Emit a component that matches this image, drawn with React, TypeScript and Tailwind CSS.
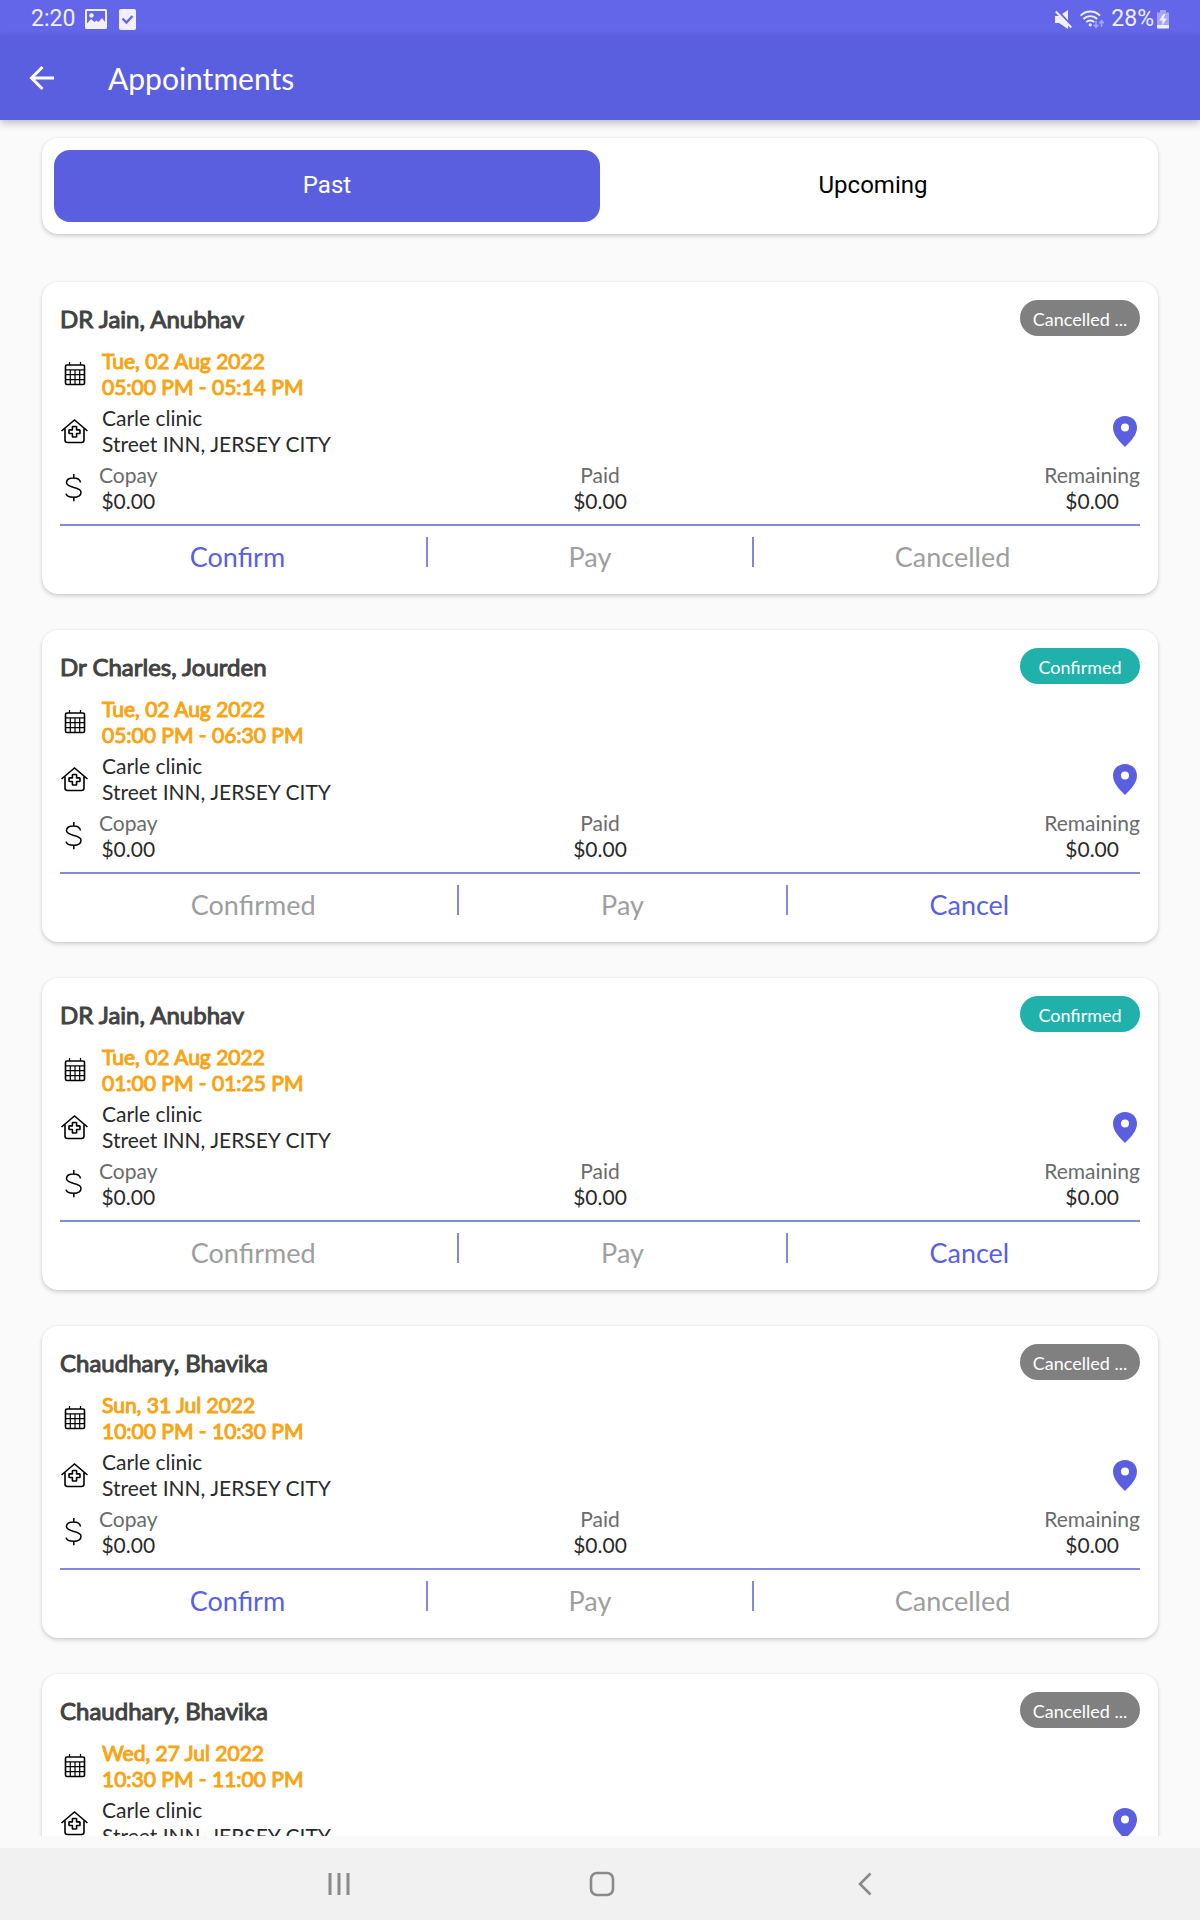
import clsx from "clsx";
import React from "react";

type Appointment = {
   doctor: string;
   date: string;
   time: string;
   confirmed: boolean;
};

const appointments: Appointment[] = [
   { doctor: "DR Jain, Anubhav", date: "Tue, 02 Aug 2022", time: "05:00 PM - 05:14 PM", confirmed: false },
   { doctor: "Dr Charles, Jourden", date: "Tue, 02 Aug 2022", time: "05:00 PM - 06:30 PM", confirmed: true },
   { doctor: "DR Jain, Anubhav", date: "Tue, 02 Aug 2022", time: "01:00 PM - 01:25 PM", confirmed: true },
   { doctor: "Chaudhary, Bhavika", date: "Sun, 31 Jul 2022", time: "10:00 PM - 10:30 PM", confirmed: false },
   { doctor: "Chaudhary, Bhavika", date: "Wed, 27 Jul 2022", time: "10:30 PM - 11:00 PM", confirmed: false },
];

const cardStyle =
   "rounded-2xl bg-white shadow-[0_2px_4px_rgba(0,0,0,0.18),0_0_2px_rgba(0,0,0,0.06)]";

function StatusBar() {
   return (
      <div className="flex h-9 shrink-0 items-center justify-between bg-[#6366e8] pt-0.5 pr-[31px] pl-[31px] text-[#f0f0ff]">
         <div className="flex items-center">
            <span className="font-[Roboto,sans-serif] text-[23px] leading-8">2:20</span>
            <svg className="ml-[10px] h-5 w-[22px]" viewBox="0 0 22 20">
               <path
                  fill="currentColor"
                  fillRule="evenodd"
                  d="M1.5 0h19A1.5 1.5 0 0 1 22 1.500v17a1.500 1.500 0 0 1-1.500 1.500h-19A1.500 1.500 0 0 1 0 18.500v-17A1.500 1.500 0 0 1 1.500 0zM2 2v12.500l4-4.500 3.500 3 2-1.500 2 1.500L17 9l3 4V2z"
               />
               <circle cx="6.500" cy="6.500" r="2.200" fill="currentColor" />
            </svg>
            <svg className="ml-3 h-[21px] w-[17px]" viewBox="0 0 17 21">
               <rect width="17" height="21" rx="2" fill="currentColor" />
               <path d="M3.500 9.500l4 4 6-6.500" fill="none" stroke="#6366e8" strokeWidth="2.400" />
            </svg>
         </div>
         <div className="flex items-center">
            <svg className="h-[19px] w-[17px]" viewBox="0 0 17 19">
               <path d="M0 6h4l9-6v19l-9-6H0z" fill="currentColor" />
               <path d="M2 .5l15 16.500" stroke="#6366e8" strokeWidth="3" />
               <path d="M.8 1.500l15.500 16" stroke="currentColor" strokeWidth="2" />
            </svg>
            <svg className="ml-2 h-[19px] w-6" viewBox="0 0 24 19">
               <g fill="none" stroke="currentColor" strokeWidth="1.800">
                  <path d="M.6 5.600a13.500 13.500 0 0 1 19.400 0" />
                  <path d="M3.500 9a9.500 9.500 0 0 1 13.600 0" />
                  <path d="M6.300 12.200a5.600 5.600 0 0 1 8 0" />
               </g>
               <circle cx="10.300" cy="14.800" r="1.600" fill="currentColor" />
               <g fill="none" stroke="#a5a6f6" strokeWidth="1.600">
                  <path d="M16 11v6M13.800 14.800L16 17.200l2.200-2.400" />
                  <path d="M21.500 17v-6M19.300 13.200l2.200-2.400 2.200 2.400" />
               </g>
            </svg>
            <span className="ml-[7px] font-[Roboto,sans-serif] text-[23px] leading-8">28%</span>
            <svg className="ml-[3px] h-[19px] w-3" viewBox="0 0 12 19">
               <path d="M3 0h6v2.500h3V15H0V2.500h3z" fill="#a5a6f6" />
               <path d="M0 15h12v3.500H0zM6.500 4L2 10.500h3.500L5 15.500l5-7H6.500L8.500 4z" fill="currentColor" />
            </svg>
         </div>
      </div>
   );
}

function CalendarIcon() {
   return (
      <svg className="h-7 w-7" viewBox="0 0 28 28" fill="none" stroke="#000">
         <rect x="5.500" y="5" width="19" height="19.500" rx="1.500" strokeWidth="1.600" />
         <path
            d="M5 9.800h20M5 14.700h20M5 19.600h20M10.300 10v14M15 10v14M19.700 10v14M9.500 2v3M20.500 2v3"
            strokeWidth="1.200"
         />
      </svg>
   );
}

function ClinicIcon() {
   return (
      <svg className="h-7 w-7" viewBox="0 0 28 28" fill="none" stroke="#000" strokeWidth="1.600">
         <path d="M1.500 14L14.500 3l13 11" />
         <path d="M5 11.500V23a2.500 2.500 0 0 0 2.500 2.500h14A2.500 2.500 0 0 0 24 23V11.500" />
         <path
            d="M13 9.500h3a.6.6 0 0 1 .6.6v2.800h2.800a.6.6 0 0 1 .6.6v2.400a.6.6 0 0 1-.6.6h-2.800v2.900a.6.6 0 0 1-.6.6h-3a.6.6 0 0 1-.6-.6v-2.900H9.600a.6.6 0 0 1-.6-.6v-2.400a.6.6 0 0 1 .6-.6h2.800v-2.800a.6.6 0 0 1 .6-.6z"
            strokeLinejoin="round"
         />
      </svg>
   );
}

function DollarIcon() {
   return (
      <svg className="h-7 w-7" viewBox="0 0 28 28" fill="none" stroke="#000" strokeWidth="1.500">
         <path d="M20.500 8.500C20 5.500 17.500 4 13.500 4S6.500 5.500 6.500 8.600c0 6.300 14.500 3.600 14.500 9.700 0 3-2.500 5-7.500 5-4.800 0-7-1.500-7.500-3.600M13.800 0v4M13.800 23.300v4" />
      </svg>
   );
}

function PinIcon() {
   return (
      <svg className="h-[31px] w-6" viewBox="0 0 24 31">
         <path
            fill="#5a5fe0"
            fillRule="evenodd"
            d="M12 0C5 0 0 5 0 11.500 0 19 6 25 12 31c6-6 12-12 12-19.500C24 5 19 0 12 0zm0 7.500a4 4 0 1 1 0 8 4 4 0 0 1 0-8z"
         />
      </svg>
   );
}

function Amount({ label, className }: { label: string; className?: string }) {
   return (
      <div className={clsx("flex flex-col items-center", className)}>
         <span className="text-[#6b6b6b]">{label}</span>
         <span className="text-[#2a2a2a]">$0.00</span>
      </div>
   );
}

function Action({ label, active }: { label: string; active?: boolean }) {
   return (
      <button
         type="button"
         disabled={!active}
         className={clsx("mt-1 text-[27px] leading-8", active ? "text-[#5a5fe0]" : "text-[#9e9e9e]")}
      >
         {label}
      </button>
   );
}

function ActionDivider() {
   return <span className="mx-[11px] h-[30px] w-0.5 bg-[#8488dc]" />;
}

function AppointmentCard({ item }: { item: Appointment }) {
   return (
      <article className={clsx("shrink-0 px-[18px] pt-[18px] pb-[21px]", cardStyle)}>
         <div className="flex items-start justify-between">
            <h2 className="text-2xl leading-[38px] font-normal text-[#424242] [-webkit-text-stroke:1px_#424242]">
               {item.doctor}
            </h2>
            <span
               className={clsx(
                  "h-9 w-[120px] rounded-full text-center text-lg leading-[38px] text-white",
                  item.confirmed ? "bg-[#20b2aa]" : "bg-[#808080]"
               )}
            >
               {item.confirmed ? "Confirmed" : "Cancelled ..."}
            </span>
         </div>

         <div className="mt-[10px] flex flex-col gap-[5px] text-[21px] leading-[26px]">
            <div className="flex items-center">
               <CalendarIcon />
               <p className="ml-[14px] text-[#f8a413] [-webkit-text-stroke:1px_#f8a413]">
                  {item.date}
                  <br />
                  {item.time}
               </p>
            </div>
            <div className="flex items-center">
               <ClinicIcon />
               <p className="ml-[14px] text-[#2a2a2a]">
                  Carle clinic
                  <br />
                  Street INN, JERSEY CITY
               </p>
               <a href="#map" aria-label="Open map" className="mr-[3px] ml-auto">
                  <PinIcon />
               </a>
            </div>
            <div className="grid grid-cols-3">
               <div className="flex items-center">
                  <DollarIcon />
                  <Amount label="Copay" className="ml-[11px]" />
               </div>
               <Amount label="Paid" />
               <Amount label="Remaining" className="justify-self-end" />
            </div>
         </div>

         <hr className="mt-[10px] border-t-2 border-[#8488dc]" />
         <div className="mt-[11px] flex items-start justify-evenly">
            <Action label={item.confirmed ? "Confirmed" : "Confirm"} active={!item.confirmed} />
            <ActionDivider />
            <Action label="Pay" />
            <ActionDivider />
            <Action label={item.confirmed ? "Cancel" : "Cancelled"} active={item.confirmed} />
         </div>
      </article>
   );
}

function NavigationBar() {
   return (
      <nav className="flex h-[72px] shrink-0 items-center justify-center gap-[235px] bg-[#f1f1f1] pl-[3px]">
         <button type="button" aria-label="Recent apps">
            <svg className="h-7 w-7" viewBox="0 0 28 28" stroke="#8a8a8a" strokeWidth="3">
               <path d="M5 3v22M14 3v22M23 3v22" />
            </svg>
         </button>
         <button type="button" aria-label="Home">
            <svg className="h-7 w-7" viewBox="0 0 28 28" fill="none" stroke="#8a8a8a" strokeWidth="2.600">
               <rect x="3" y="3" width="22" height="22" rx="6" />
            </svg>
         </button>
         <button type="button" aria-label="Back">
            <svg className="h-7 w-7" viewBox="0 0 28 28" fill="none" stroke="#8a8a8a" strokeWidth="2.600">
               <path d="M19.500 3.500L9 14l10.500 10.500" />
            </svg>
         </button>
      </nav>
   );
}

export default function App(): JSX.Element {
   const [tab, setTab] = React.useState("Past");
   return (
      <div className="flex h-screen flex-col bg-[#fafafa] font-[Lato,sans-serif]">
         <StatusBar />
         <header className="relative flex h-[84px] shrink-0 items-center bg-[#5a5fe0] pl-[27px] text-white shadow-[0_3px_8px_rgba(0,0,0,0.25)]">
            <button type="button" aria-label="Back">
               <svg className="h-[30px] w-[30px]" viewBox="0 0 30 30" fill="none" stroke="currentColor" strokeWidth="3">
                  <path d="M27 15H5M15.500 4L4.500 15l11 11" />
               </svg>
            </button>
            <h1 className="ml-[51px] text-[30px] leading-9">Appointments</h1>
         </header>

         <div className={clsx("mx-[42px] mt-[18px] grid shrink-0 grid-cols-2 p-3", cardStyle)}>
            {["Past", "Upcoming"].map((name) => (
               <button
                  key={name}
                  type="button"
                  onClick={() => setTab(name)}
                  className={clsx(
                     "h-[72px] rounded-2xl pb-0.5 font-[Roboto,sans-serif] text-2xl",
                     tab === name ? "bg-[#5a5fe0] text-white" : "text-black"
                  )}
               >
                  {name}
               </button>
            ))}
         </div>

         <main className="mt-3 mb-3 flex min-h-0 flex-1 flex-col gap-9 overflow-hidden px-[42px] pt-9">
            {appointments.map((item, i) => (
               <AppointmentCard key={i} item={item} />
            ))}
         </main>
         <NavigationBar />
      </div>
   );
}
